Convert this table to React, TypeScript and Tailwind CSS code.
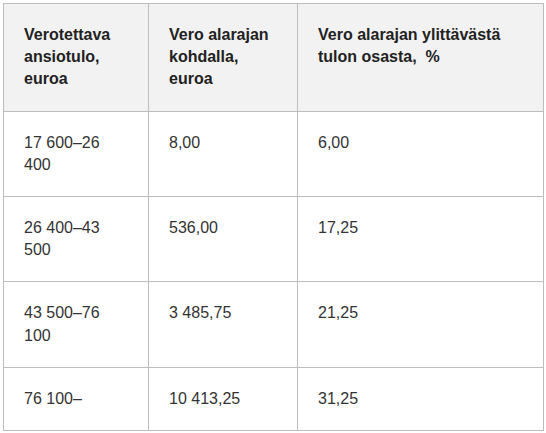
const rows = [
  ["17 600–26 400", "8,00", "6,00"],
  ["26 400–43 500", "536,00", "17,25"],
  ["43 500–76 100", "3 485,75", "21,25"],
  ["76 100–", "10 413,25", "31,25"],
];

export default function App() {
  return (
    <div className="bg-white p-[3px] font-['Liberation_Sans',Arial,sans-serif] text-[16px] leading-[22.2px] text-[#333]">
      <table className="w-[540px] table-fixed border-collapse">
        <colgroup>
          <col className="w-[145px]" />
          <col className="w-[149px]" />
          <col className="w-[246px]" />
        </colgroup>
        <thead>
          <tr className="bg-[#f2f2f2]">
            <th className="border border-[#bdbdbd] px-5 py-5 text-left align-top font-bold text-[#222]">
              Verotettava ansiotulo, euroa
            </th>
            <th className="border border-[#bdbdbd] px-5 py-5 text-left align-top font-bold text-[#222]">
              Vero alarajan kohdalla, euroa
            </th>
            <th className="border border-[#bdbdbd] px-5 py-5 text-left align-top font-bold text-[#222]">
              Vero alarajan ylittävästä tulon osasta,&nbsp; %
            </th>
          </tr>
        </thead>
        <tbody>
          {rows.map((r) => (
            <tr key={r[0]}>
              {r.map((c, i) => (
                <td key={i} className="border border-[#bdbdbd] px-5 py-5 align-top">
                  {c}
                </td>
              ))}
            </tr>
          ))}
        </tbody>
      </table>
    </div>
  );
}
